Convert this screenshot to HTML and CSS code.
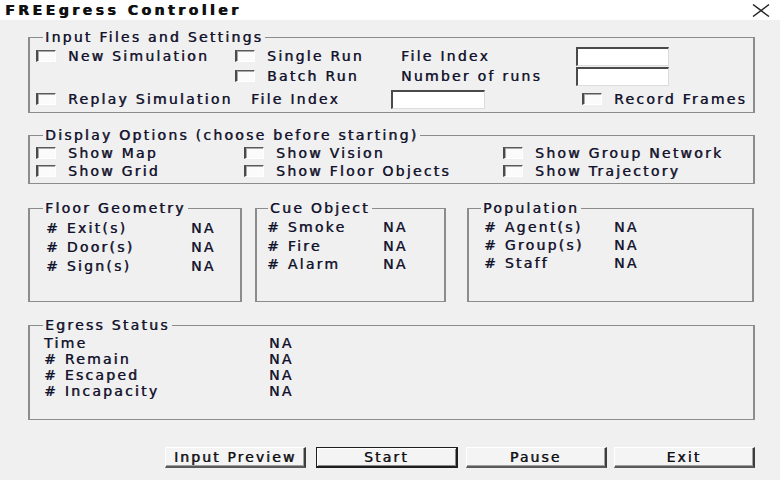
FILE: index.html
```html
<!DOCTYPE html>
<html>
<head>
<meta charset="utf-8">
<link rel="stylesheet" href="styles.css">
</head>
<body>
<div class="window">
  <div class="titlebar">
    <span class="title">FREEgress Controller</span>
    <svg class="close" width="18" height="13" viewBox="0 0 18 13"><path d="M1 0.5 L17 12.5 M17 0.5 L1 12.5" stroke="#222" stroke-width="1.4" fill="none"/></svg>
  </div>
  <div class="content">
    <fieldset class="group g-input">
      <legend>Input Files and Settings</legend>
      <div class="inner">
        <div class="irow">
          <label class="chk w199"><span class="box"></span>New Simulation</label>
          <label class="chk w166"><span class="box"></span>Single Run</label>
          <span class="lbl w175">File Index</span>
          <span class="tb w93"></span>
        </div>
        <div class="irow">
          <span class="w199"></span>
          <label class="chk w166"><span class="box"></span>Batch Run</label>
          <span class="lbl w175">Number of runs</span>
          <span class="tb w93"></span>
        </div>
        <div class="irow r3">
          <label class="chk w215"><span class="box"></span>Replay Simulation</label>
          <span class="lbl w140">File Index</span>
          <span class="tb w94"></span>
          <span class="w97"></span>
          <label class="chk"><span class="box"></span>Record Frames</label>
        </div>
      </div>
    </fieldset>

    <fieldset class="group g-display">
      <legend>Display Options (choose before starting)</legend>
      <div class="inner dgrid">
        <label class="chk"><span class="box"></span>Show Map</label>
        <label class="chk"><span class="box"></span>Show Vision</label>
        <label class="chk"><span class="box"></span>Show Group Network</label>
        <label class="chk"><span class="box"></span>Show Grid</label>
        <label class="chk"><span class="box"></span>Show Floor Objects</label>
        <label class="chk"><span class="box"></span>Show Trajectory</label>
      </div>
    </fieldset>

    <div class="stats">
      <fieldset class="group g-floor">
        <legend>Floor Geometry</legend>
        <div class="inner">
          <div class="srow"><span class="sk">#&nbsp;Exit(s)</span><span>NA</span></div>
          <div class="srow"><span class="sk">#&nbsp;Door(s)</span><span>NA</span></div>
          <div class="srow"><span class="sk">#&nbsp;Sign(s)</span><span>NA</span></div>
        </div>
      </fieldset>
      <fieldset class="group g-cue">
        <legend>Cue Object</legend>
        <div class="inner">
          <div class="srow"><span class="sk">#&nbsp;Smoke</span><span>NA</span></div>
          <div class="srow"><span class="sk">#&nbsp;Fire</span><span>NA</span></div>
          <div class="srow"><span class="sk">#&nbsp;Alarm</span><span>NA</span></div>
        </div>
      </fieldset>
      <fieldset class="group g-pop">
        <legend>Population</legend>
        <div class="inner">
          <div class="srow"><span class="sk">#&nbsp;Agent(s)</span><span>NA</span></div>
          <div class="srow"><span class="sk">#&nbsp;Group(s)</span><span>NA</span></div>
          <div class="srow"><span class="sk">#&nbsp;Staff</span><span>NA</span></div>
        </div>
      </fieldset>
    </div>

    <fieldset class="group g-egress">
      <legend>Egress Status</legend>
      <div class="inner">
        <div class="erow"><span class="ek">Time</span><span>NA</span></div>
        <div class="erow"><span class="ek">#&nbsp;Remain</span><span>NA</span></div>
        <div class="erow"><span class="ek">#&nbsp;Escaped</span><span>NA</span></div>
        <div class="erow"><span class="ek">#&nbsp;Incapacity</span><span>NA</span></div>
      </div>
    </fieldset>

    <div class="buttons">
      <div class="btn">Input Preview</div>
      <div class="btn default">Start</div>
      <div class="btn">Pause</div>
      <div class="btn">Exit</div>
    </div>
  </div>
</div>
</body>
</html>
```

FILE: styles.css
```css
html, body {
  margin: 0;
  padding: 0;
}
body {
  width: 780px;
  height: 480px;
  overflow: hidden;
  background: #f0f0f0;
  font-family: "DejaVu Sans", "Liberation Sans", sans-serif;
  font-size: 14px;
  letter-spacing: 2.25px;
  color: #14142e;
  text-shadow: 0.6px 0 0 rgba(20, 20, 46, 0.8);
}
.window {
  width: 780px;
  height: 480px;
}
.titlebar {
  height: 20px;
  background: #ffffff;
  display: flex;
  align-items: center;
  justify-content: space-between;
  padding: 0 10px 0 5px;
}
.title {
  font-weight: bold;
  font-size: 14px;
  letter-spacing: 3.5px;
  color: #111;
  text-shadow: 0.7px 0 0 #111;
}
.close {
  display: block;
}
.content {
  padding: 0 25px 0 28px;
}
.group {
  margin: 0;
  padding: 0;
  box-sizing: border-box;
  border: 1px solid #8c8c8c;
  border-left-width: 2px;
  border-right-width: 2px;
  min-width: 0;
}
.group legend {
  margin-left: 13px;
  padding: 0 2px;
  line-height: 14px;
  height: 14px;
}
.g-input {
  margin-top: 10px;
  height: 83px;
}
.g-input .inner {
  padding: 2px 0 0 6px;
}
.irow {
  display: flex;
  align-items: center;
  height: 20px;
}
.irow.r3 {
  margin-top: 3px;
}
.chk {
  display: flex;
  align-items: center;
  white-space: nowrap;
}
.box {
  width: 20px;
  height: 12px;
  box-sizing: border-box;
  background: #fbfbfb;
  border-top: 1px solid #5a5a5a;
  border-left: 2px solid #4a4a4a;
  border-right: 1px solid #ffffff;
  border-bottom: 1px solid #ffffff;
  box-shadow: inset 1px 1px 0 #a8a8a8;
  margin-right: 12px;
  flex: none;
}
.lbl {
  white-space: nowrap;
}
.tb {
  height: 19px;
  box-sizing: border-box;
  background: #ffffff;
  border-top: 2px solid #4a4a4a;
  border-left: 2px solid #4a4a4a;
  border-right: 1px solid #dcdcdc;
  border-bottom: 1px solid #dcdcdc;
}
.w199 { width: 199px; flex: none; }
.w166 { width: 166px; flex: none; }
.w175 { width: 175px; flex: none; }
.w215 { width: 215px; flex: none; }
.w140 { width: 140px; flex: none; }
.w93 { width: 93px; flex: none; }
.w94 { width: 94px; flex: none; }
.w97 { width: 97px; flex: none; }

.g-display {
  margin-top: 15px;
  height: 56px;
}
.dgrid {
  padding: 2px 0 0 6px;
  display: grid;
  grid-template-columns: 208px 259px auto;
  grid-auto-rows: 18px;
  align-items: center;
}

.stats {
  display: flex;
  margin-top: 17px;
}
.stats .group {
  height: 101px;
}
.stats .inner {
  padding-top: 3px;
}
.g-floor {
  width: 214px;
}
.g-floor .inner { padding-left: 16px; }
.g-cue {
  width: 191px;
  margin-left: 13px;
}
.g-cue legend { margin-left: 11px; }
.g-cue .inner { padding-left: 10px; }
.g-pop {
  width: 287px;
  margin-left: 21px;
}
.g-pop legend { margin-left: 12px; }
.g-pop .inner { padding-left: 15px; }
.srow {
  display: flex;
  align-items: center;
  height: 19px;
  white-space: nowrap;
}
.g-cue .srow { height: 18.5px; }
.g-pop .srow { height: 18px; }
.g-floor .sk { width: 145px; }
.g-cue .sk { width: 116px; }
.g-pop .sk { width: 130px; }

.g-egress {
  margin-top: 16px;
  height: 102px;
}
.g-egress .inner {
  padding: 3px 0 0 14px;
}
.erow {
  display: flex;
  align-items: center;
  height: 16px;
  white-space: nowrap;
}
.ek {
  width: 225px;
}

.buttons {
  display: flex;
  margin-top: 27px;
  padding-left: 137px;
}
.btn {
  width: 144px;
  height: 21px;
  box-sizing: border-box;
  background: #f4f4f4;
  border-top: 1px solid #ffffff;
  border-left: 1px solid #ffffff;
  border-right: 2px solid #3c3c3c;
  border-bottom: 2px solid #5a5a5a;
  box-shadow: inset -1px -1px 0 #a0a0a0;
  display: flex;
  align-items: center;
  justify-content: center;
  letter-spacing: 2.1px;
  color: #111;
}
.btn + .btn { margin-left: 8px; }
.btn.default {
  margin-left: 10px;
  border: 1px solid #1e1e1e;
  border-right-width: 2px;
  border-bottom-width: 2px;
  box-shadow: inset 1px 1px 0 #ffffff, inset -1px -1px 0 #8a8a8a;
}
.btn:last-child { margin-left: 7px; }
```
